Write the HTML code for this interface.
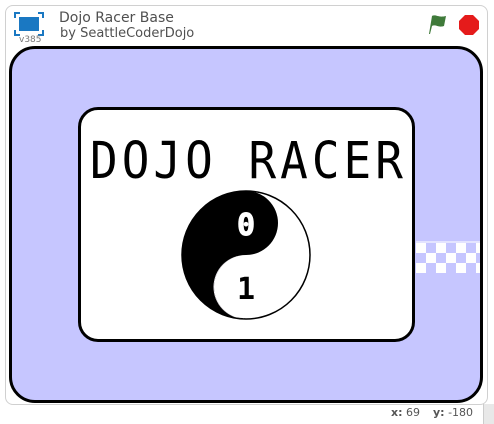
<!DOCTYPE html>
<html><head><style>
body{margin:0;width:494px;height:424px;background:#fff;position:relative;overflow:hidden;font-family:"Liberation Sans","DejaVu Sans",sans-serif}
.frame{position:absolute;left:5px;top:5px;width:481px;height:398px;border:1px solid #d0d0d0;border-radius:8px;background:#fff}
.t1{position:absolute;left:59px;top:10px;font-size:14px;color:#505050;font-family:"DejaVu Sans",sans-serif}
.t2{position:absolute;left:60px;top:26px;font-size:13px;color:#505050;font-family:"DejaVu Sans",sans-serif}
.ver{position:absolute;left:19px;top:35px;font-size:9px;color:#777;font-family:"DejaVu Sans",sans-serif}
.stage{position:absolute;left:9px;top:46px;width:468px;height:351px;border:3px solid #000;border-radius:26px;background:#c6c6ff;overflow:hidden}
.card{position:absolute;left:66px;top:58px;width:331px;height:229px;border:3px solid #000;border-radius:20px;background:#fff}
.title{position:absolute;left:9px;top:25px;white-space:nowrap;font-family:"DejaVu Sans Mono",monospace;font-size:46px;letter-spacing:4px;color:#000;line-height:46px;transform:scaleY(1.1);transform-origin:0 0}
.bot{position:absolute;top:406px;font-size:11px;color:#555;font-family:"DejaVu Sans",sans-serif}
</style></head><body>
<div class="frame"></div>
<svg style="position:absolute;left:14px;top:12px" width="30" height="24" viewBox="0 0 30 24">
<path d="M1 6V1H6M24 1H29V6M29 18V23H24M6 23H1V18" stroke="#1a78c2" stroke-width="2" fill="none"/>
<rect x="5" y="5" width="20" height="14" fill="#1a78c2"/></svg>
<div class="ver">v385</div>
<div class="t1">Dojo Racer Base</div>
<div class="t2">by SeattleCoderDojo</div>
<svg style="position:absolute;left:426px;top:13px" width="22" height="22" viewBox="0 0 22 22">
<path d="M3 21L6 3C10 1 12 5 20 3L18 13C12 15 10 11 6 13L4 21Z" fill="#3f7a3a"/></svg>
<svg style="position:absolute;left:458px;top:14px" width="22" height="22" viewBox="0 0 22 22">
<polygon points="7,1 15,1 21,7 21,15 15,21 7,21 1,15 1,7" fill="#e51b1b"/></svg>
<div class="stage">
<svg style="position:absolute;left:404px;top:192px" width="70" height="32">
<rect x="0" y="0" width="70" height="2" fill="#e4e4ff"/>
<g fill="#fff">
<rect x="0" y="2" width="10" height="10"/><rect x="20" y="2" width="10" height="10"/><rect x="40" y="2" width="10" height="10"/><rect x="60" y="2" width="10" height="10"/>
<rect x="10" y="12" width="10" height="10"/><rect x="30" y="12" width="10" height="10"/><rect x="50" y="12" width="10" height="10"/>
<rect x="0" y="22" width="10" height="10"/><rect x="20" y="22" width="10" height="10"/><rect x="40" y="22" width="10" height="10"/><rect x="60" y="22" width="10" height="10"/>
</g></svg>
<div class="card">
<div class="title">DOJO RACER</div>
<svg style="position:absolute;left:99px;top:79px" width="132" height="132" viewBox="-66 -66 132 132">
<circle r="64" fill="#fff" stroke="#000" stroke-width="1.5"/>
<path d="M0 -64A64 64 0 0 0 0 64A32 32 0 0 1 0 0A32 32 0 0 0 0 -64Z" fill="#000"/>
<path d="M0 0A32 32 0 0 0 0 64A64 64 0 0 1 -1 64A32 32 0 0 1 0 0Z" fill="#fdf6ff"/>
<text x="0" y="-20" font-family="DejaVu Sans Mono,monospace" font-weight="bold" font-size="30" fill="#fff" stroke="#fff" stroke-width="1" text-anchor="middle">0</text>
<text x="0" y="44" font-family="DejaVu Sans Mono,monospace" font-weight="bold" font-size="30" fill="#000" text-anchor="middle">1</text>
</svg>
</div>
</div>
<div class="bot" style="left:391px"><b>x:</b> 69</div>
<div class="bot" style="left:433px"><b>y:</b> -180</div>
<div style="position:absolute;left:483px;top:404px;width:11px;height:20px;background:#e8e8e8;border-left:1px solid #ccc"></div>
</body></html>
